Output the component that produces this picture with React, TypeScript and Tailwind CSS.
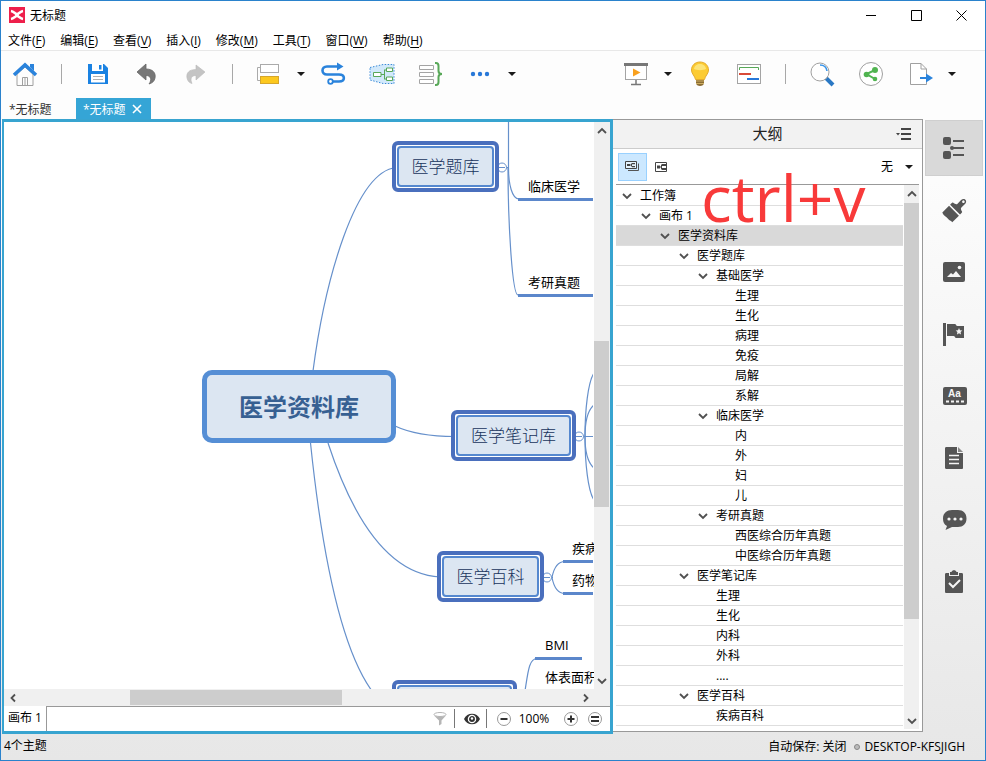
import type { ReactNode } from "react";

const menus = [
  ["文件", "F"],
  ["编辑", "E"],
  ["查看", "V"],
  ["插入", "I"],
  ["修改", "M"],
  ["工具", "T"],
  ["窗口", "W"],
  ["帮助", "H"],
];

type Row = { depth: number; text: string; open?: boolean; selected?: boolean };

const outline: Row[] = [
  { depth: 0, text: "工作簿", open: true },
  { depth: 1, text: "画布 1", open: true },
  { depth: 2, text: "医学资料库", open: true, selected: true },
  { depth: 3, text: "医学题库", open: true },
  { depth: 4, text: "基础医学", open: true },
  { depth: 5, text: "生理" },
  { depth: 5, text: "生化" },
  { depth: 5, text: "病理" },
  { depth: 5, text: "免疫" },
  { depth: 5, text: "局解" },
  { depth: 5, text: "系解" },
  { depth: 4, text: "临床医学", open: true },
  { depth: 5, text: "内" },
  { depth: 5, text: "外" },
  { depth: 5, text: "妇" },
  { depth: 5, text: "儿" },
  { depth: 4, text: "考研真题", open: true },
  { depth: 5, text: "西医综合历年真题" },
  { depth: 5, text: "中医综合历年真题" },
  { depth: 3, text: "医学笔记库", open: true },
  { depth: 4, text: "生理" },
  { depth: 4, text: "生化" },
  { depth: 4, text: "内科" },
  { depth: 4, text: "外科" },
  { depth: 4, text: "...." },
  { depth: 3, text: "医学百科", open: true },
  { depth: 4, text: "疾病百科" },
];

function ToolButton({ label, children }: { label: string; children: ReactNode }) {
  return (
    <button aria-label={label} className="flex h-[26px] w-[26px] shrink-0 items-center justify-center">
      <svg width="26" height="26" viewBox="0 0 26 26" fill="none">
        {children}
      </svg>
    </button>
  );
}

function CaretButton({ label }: { label: string }) {
  return (
    <button aria-label={label} className="-mx-2 flex h-[26px] w-2 shrink-0 items-center">
      <Caret />
    </button>
  );
}

function Caret() {
  return (
    <svg width="8" height="4" viewBox="0 0 8 4" className="block">
      <path d="M0 0H8L4 4Z" fill="#1a1a1a" />
    </svg>
  );
}

function Separator() {
  return <div className="h-5 w-px shrink-0 bg-[#a8a8a8]" />;
}

function Arrow({ d }: { d: string }) {
  return (
    <svg width="10" height="10" viewBox="0 0 10 10" fill="none" className="block">
      <path d={d} stroke="#505050" strokeWidth="1.800" />
    </svg>
  );
}

const UP = "M1 7L5 3L9 7";
const DOWN = "M1 3L5 7L9 3";
const LEFT = "M7 1.5L3.5 5L7 8.5";
const RIGHT = "M3 1.5L6.5 5L3 8.5";

function Toolbar() {
  return (
    <div className="flex h-[47px] shrink-0 items-center justify-between pr-[37px] pb-px pl-[11px]">
      <div className="flex items-center gap-[23px]">
        <ToolButton label="主页">
          <path d="M5 13V24.5H21V13L13 6Z" fill="#fdfdfd" stroke="#a0a0a0" />
          <path d="M10.500 24V16.500H15.500V24M13 16.500V24" stroke="#a0a0a0" />
          <path d="M18 3H22V10L18 6Z" fill="#2a83dc" />
          <path d="M2 14L13 4L24 14" stroke="#2a83dc" strokeWidth="3.600" />
        </ToolButton>
        <Separator />
        <ToolButton label="保存">
          <path d="M3 3H19L23 7V23H3Z" fill="#1a82e2" />
          <path d="M7 3H18V10H7Z" fill="#fff" />
          <path d="M14 4H16.500V8.500H14Z" fill="#1a82e2" />
          <path d="M6 13H20V21.500H6Z" fill="#fff" />
          <path d="M8 15.500H18M8 18.500H18" stroke="#b0b0b0" />
        </ToolButton>
        <ToolButton label="撤消">
          <path d="M3 11L12 3V8C19 8 22 12 21 17C20.500 20 18.500 22 15 23C18 19 17 14.500 12 14.500V19Z" fill="#777" stroke="#666" strokeWidth=".8" />
        </ToolButton>
        <ToolButton label="重做">
          <path d="M22 11L13 4V8.500C6 8.500 3 12 4 17C4.500 20 6.500 22 9 22.500C7 18 8 14.500 13 14.500V19Z" fill="#c4c4c4" stroke="#b8b8b8" strokeWidth=".6" />
        </ToolButton>
        <Separator />
        <ToolButton label="主题">
          <path d="M4.500 6.500H1.500V19.500H4.500" stroke="#aaa" />
          <rect x="4.500" y="3.500" width="18" height="8" fill="#fff" stroke="#aaa" />
          <rect x="4.500" y="15.500" width="18" height="7" fill="#fcc81e" stroke="#d6a62c" />
        </ToolButton>
        <CaretButton label="主题选项" />
        <ToolButton label="联系">
          <path d="M18 5.500H7C1 5.500 1 13.500 7 13.500H19C25.500 13.500 25.500 20.500 19 20.500H13" stroke="#2a83dc" strokeWidth="2.600" />
          <path d="M17 1.500L23.500 5.500L17 9.500Z" fill="#2a83dc" />
          <circle cx="10.500" cy="20.500" r="2.300" fill="#fff" stroke="#2a83dc" strokeWidth="1.800" />
        </ToolButton>
        <ToolButton label="外框">
          <path d="M1 6.500L14 3.500H25V22.500H14L1 19Z" fill="#d2e9fb" stroke="#3a8ad8" strokeDasharray="1.500 1.500" />
          <path d="M12 13.500H15M15.500 9V18M15 9H17M15 18H17" stroke="#58a858" />
          <path d="M4.500 11.500H12V15.500H4.500ZM17.500 7H23.500V10.500H17.500ZM17.500 16H23.500V19.500H17.500Z" fill="#fff" stroke="#58a858" />
        </ToolButton>
        <ToolButton label="概要">
          <path d="M1.500 4.500H15.500V8.500H1.500ZM1.500 11.500H15.500V15.500H1.500ZM1.500 18.500H15.500V22.500H1.500Z" fill="#fff" stroke="#a4a4a4" />
          <path d="M17 2H18C20 2 20.500 3 20.500 5V10C20.500 12 21.500 13 24 13C21.500 13 20.500 14 20.500 16V21C20.500 23 20 24 18 24H17" stroke="#58a858" strokeWidth="2" />
        </ToolButton>
        <ToolButton label="更多">
          <circle cx="6" cy="13" r="2.200" fill="#2878d8" />
          <circle cx="13" cy="13" r="2.200" fill="#2878d8" />
          <circle cx="20" cy="13" r="2.200" fill="#2878d8" />
        </ToolButton>
        <CaretButton label="更多选项" />
      </div>
      <div className="flex items-center gap-[23px]">
        <ToolButton label="演示">
          <rect x="2.500" y="4.500" width="21" height="14" fill="#fff" stroke="#a4a4a4" />
          <path d="M1 2H25V5H1Z" fill="#777" />
          <path d="M10 7.500L17.500 11.500L10 15.500Z" fill="#f8a01e" />
          <path d="M13 19V23.500M8 23.500H18" stroke="#777" strokeWidth="1.500" />
        </ToolButton>
        <CaretButton label="演示选项" />
        <ToolButton label="头脑风暴">
          <path d="M9 17.500H17V22C17 24 15 25 13 25S9 24 9 22Z" fill="#8c6d35" />
          <path d="M9 20H17M9 22.500H17" stroke="#e0c070" strokeWidth=".8" />
          <path d="M13 1C8 1 4.500 4.500 4.500 9C4.500 13 8 15 8.500 18.500H17.500C18 15 21.500 13 21.500 9C21.500 4.500 18 1 13 1Z" fill="#fccb32" stroke="#e4ab2c" />
          <path d="M7 8C7.500 4.500 10 3 13 3S18.500 4.500 19 8C16 9.500 10 9.500 7 8Z" fill="#fde477" />
        </ToolButton>
        <ToolButton label="甘特图">
          <rect x="1.500" y="3.500" width="23" height="19" fill="#fff" stroke="#a4a4a4" />
          <path d="M3.500 9V6.500H22.500V9" stroke="#58a858" />
          <path d="M3 13H15" stroke="#d84a38" strokeWidth="2" />
          <path d="M11 18H23" stroke="#2878d8" strokeWidth="2" />
        </ToolButton>
        <Separator />
        <ToolButton label="搜索">
          <path d="M17 17L24 24" stroke="#2a78c4" strokeWidth="4" />
          <circle cx="11" cy="11" r="9" fill="#fff" stroke="#a0a0a0" />
          <path d="M11 4C15 4 17.500 6.500 18 10" stroke="#3a96ea" strokeWidth="1.600" />
        </ToolButton>
        <ToolButton label="分享">
          <circle cx="13" cy="13" r="11.500" fill="#fff" stroke="#a0a0a0" />
          <path d="M17 9L8.500 13L17 18" stroke="#50b450" strokeWidth="2" />
          <circle cx="17" cy="9" r="3" fill="#50b450" />
          <circle cx="8.500" cy="13.500" r="2.800" fill="#50b450" />
          <circle cx="17" cy="18" r="2.300" fill="#50b450" />
        </ToolButton>
        <ToolButton label="导出">
          <path d="M3.500 2.500H14L19.500 8V23.500H3.500Z" fill="#fff" stroke="#a0a0a0" />
          <path d="M14 2.500V8H19.500" stroke="#a0a0a0" />
          <path d="M13 17H20" stroke="#2a83dc" strokeWidth="2" />
          <path d="M19 12.500L26 17L19 21.500Z" fill="#2a83dc" />
        </ToolButton>
        <CaretButton label="导出选项" />
      </div>
    </div>
  );
}

function Topic({ className, text }: { className: string; text: string }) {
  return (
    <div className={`absolute h-[51px] rounded-md border-4 border-[#4a6fbd] bg-white p-px ${className}`}>
      <div className="flex h-full items-center justify-center rounded-sm border-2 border-[#5588cf] bg-[#dce6f2] text-[17px] font-light whitespace-nowrap text-[#17335c]">
        {text}
      </div>
    </div>
  );
}

function Label({ className, text }: { className: string; text: string }) {
  return <span className={`absolute text-[13px] leading-5 whitespace-nowrap ${className}`}>{text}</span>;
}

function MindMap() {
  return (
    <div className="relative min-w-0 flex-1 overflow-hidden bg-white">
      <svg width="589" height="567" viewBox="4 122 589 567" fill="none" className="absolute top-0 left-0">
        <g stroke="#6690cb" strokeWidth="1.200">
          <path d="M313 371C325 280 355 172 396 167.500" />
          <path d="M395 426C412 434 430 436.500 455 436.500" />
          <path d="M328 443C350 510 385 574 440 577" />
          <path d="M310.500 443C318 515 335 640 372 691" />
          <path d="M508.500 120V168C508.500 184 512 199 519 199" />
          <path d="M508 168C508 220 512 295 518 295" />
          <path d="M499 167.500H508M576 436.500H593M544 577.500H553" />
          <path d="M594 373C588 382 585 410 585 436.500C585 463 588 491 594 500" />
          <path d="M594 405C588 410 585 422 585 436.500C585 451 588 463 594 468" />
          <path d="M552 577.500C554 567 558 561.500 565 561.500M552 577.500C554 588 558 593.500 565 593.500" />
          <path d="M525 691C528 672 529 658.500 537 658.500" />
        </g>
        <g fill="#fff" stroke="#6690cb">
          <circle cx="502" cy="167.500" r="4.500" />
          <circle cx="579" cy="436.500" r="4.500" />
          <circle cx="547" cy="577.500" r="4.500" />
          <path d="M499 167.500H505M576 436.500H582M544 577.500H550" />
        </g>
        <path
          d="M518 199.500H593M518 295.500H593M563 561.500H594M563 593.500H594M535 658.500H582"
          stroke="#5b87cb"
          strokeWidth="3"
        />
      </svg>
      <div className="absolute top-[248px] left-[198px] flex h-[73px] w-[194px] items-center justify-center rounded-[10px] border-[5px] border-[#558ed5] bg-[#dce6f2] text-2xl font-bold text-[#376092]">
        医学资料库
      </div>
      <Topic className="top-[19px] left-[388px] w-[107px]" text="医学题库" />
      <Topic className="top-[288px] left-[447px] w-[125px]" text="医学笔记库" />
      <Topic className="top-[429px] left-[433px] w-[107px]" text="医学百科" />
      <Topic className="top-[558px] left-[388px] w-[125px]" text="" />
      <Label className="top-[54px] left-[524px]" text="临床医学" />
      <Label className="top-[150px] left-[524px]" text="考研真题" />
      <Label className="top-[416px] left-[568px]" text="疾病百科" />
      <Label className="top-[448px] left-[568px]" text="药物百科" />
      <Label className="top-[513px] left-[541px]" text="BMI" />
      <Label className="top-[545px] left-[541px]" text="体表面积" />
    </div>
  );
}

function ZoomIcon({ d }: { d: string }) {
  return (
    <svg width="14" height="14" viewBox="0 0 14 14" fill="none" className="block">
      <circle cx="7" cy="7" r="6.500" fill="#fff" stroke="#999" />
      <path d={d} stroke="#333" strokeWidth="2" />
    </svg>
  );
}

function Editor() {
  return (
    <section className="ml-px flex min-w-0 flex-1 flex-col border-[3px] border-l-2 border-[#38a4d0] bg-[#f0f0f0]">
      <div className="flex min-h-0 flex-1">
        <MindMap />
        <div className="flex w-4 shrink-0 flex-col items-center justify-between">
          <button aria-label="向上滚动" className="flex h-[17px] items-center">
            <Arrow d={UP} />
          </button>
          <div className="flex w-full flex-1 flex-col">
            <div className="flex-[202]" />
            <div className="w-[15px] flex-[166] bg-[#cdcdcd]" />
            <div className="flex-[165]" />
          </div>
          <button aria-label="向下滚动" className="flex h-[17px] items-center">
            <Arrow d={DOWN} />
          </button>
        </div>
      </div>
      <div className="flex h-[17px] shrink-0 items-center pr-4">
        <button aria-label="向左滚动" className="flex w-[17px] justify-center">
          <Arrow d={LEFT} />
        </button>
        <div className="flex flex-1">
          <div className="flex-[109]" />
          <div className="h-[15px] flex-[212] bg-[#cdcdcd]" />
          <div className="flex-[235]" />
        </div>
        <button aria-label="向右滚动" className="flex w-[17px] justify-center">
          <Arrow d={RIGHT} />
        </button>
      </div>
      <div className="flex h-[25px] shrink-0 bg-white">
        <button className="w-[43px] border-r border-[#999] pb-0.5 text-center text-xs">画布 1</button>
        <div className="flex flex-1 items-center justify-end border-t border-[#999] pr-2 pb-px">
          <button aria-label="筛选" className="mr-[7px]">
            <svg width="14" height="14" viewBox="0 0 14 14" fill="none" className="block">
              <ellipse cx="7" cy="2.500" rx="6" ry="2" fill="#fff" stroke="#b5b5b5" />
              <path d="M1 3.500L6 8.500V13.500L8.500 12V8.500L13 3.500C11 5 3 5 1 3.500Z" fill="#b5b5b5" />
            </svg>
          </button>
          <div className="h-[19px] w-px bg-[#777]" />
          <button aria-label="显示" className="mr-1.5 ml-[9px]">
            <svg width="16" height="12" viewBox="0 0 16 12" fill="none" className="block">
              <path d="M0 6C3 -1 13 -1 16 6C13 13 3 13 0 6Z" fill="#333" />
              <circle cx="8" cy="6" r="3.600" fill="#333" stroke="#fff" strokeWidth="1.300" />
              <circle cx="8" cy="5.500" r="1.200" fill="#fff" />
            </svg>
          </button>
          <div className="mr-2.5 h-[19px] w-px bg-[#777]" />
          <button aria-label="缩小">
            <ZoomIcon d="M3.500 7H10.500" />
          </button>
          <button className="w-[46px] text-center text-xs">100%</button>
          <button aria-label="放大" className="ml-[7px]">
            <ZoomIcon d="M3.500 7H10.500M7 3.500V10.500" />
          </button>
          <button aria-label="实际大小" className="ml-2.5">
            <ZoomIcon d="M3 5H11M3 9H11" />
          </button>
        </div>
      </div>
    </section>
  );
}

function OutlinePanel() {
  return (
    <section className="relative mb-0.5 flex w-[310px] shrink-0 flex-col border-t border-r border-b border-[#999] bg-white">
      <div className="flex h-[29px] shrink-0 items-center border-b border-[#ccc] bg-[#f2f2f2] pr-2.5 pl-[26px]">
        <h2 className="flex-1 pb-0.5 text-center text-[15px] leading-5 text-[#222]">大纲</h2>
        <button aria-label="面板菜单">
          <svg width="16" height="12" viewBox="0 0 16 12" fill="none" className="block">
            <path d="M0 5H4L2 7.500Z" fill="#444" />
            <path d="M5 1H15M5 6H15M5 11H15" stroke="#444" strokeWidth="2" />
          </svg>
        </button>
      </div>
      <div className="mx-[3px] flex h-9 shrink-0 items-center border-b border-[#999] pr-1.5 pl-0.5">
        <button aria-label="全部画布" className="flex h-7 w-[29px] items-center justify-center border border-[#99d1ff] bg-[#cce8ff]">
          <svg width="15" height="11" viewBox="0 0 15 11" fill="none">
            <path d="M3 9.500H13.500V2.500" stroke="#555" />
            <path d="M.5 .5H11.500V7.500H.5Z" fill="#e4f2fd" stroke="#444" />
            <path d="M2 3H5V5H2ZM7 2H10V3.200H7ZM7 5H10V6.200H7Z" fill="#444" />
            <path d="M5 4H6.500V2.500M6.500 4V5.500" stroke="#444" />
          </svg>
        </button>
        <button aria-label="当前画布" className="ml-2">
          <svg width="12" height="10" viewBox="0 0 12 10" fill="none" className="block">
            <path d="M.5 .5H11.500V9.500H.5Z" fill="#fff" stroke="#444" />
            <path d="M2 3.500H5V6.500H2ZM7 2H11V4H7ZM7 6H11V8H7Z" fill="#444" />
            <path d="M5 5H6.500M6.500 2.500V7.500" stroke="#444" />
          </svg>
        </button>
        <label className="ml-auto flex items-center gap-2.5">
          <select aria-label="筛选方式" className="w-3.5 appearance-none bg-transparent text-xs">
            <option>无</option>
          </select>
          <Caret />
        </label>
      </div>
      <div className="mx-[3px] flex min-h-0 flex-1 overflow-hidden">
        <ul className="min-w-0 flex-1 pt-px">
          {outline.map((row, i) => (
            <li
              key={i}
              className={`flex h-5 items-center border-b border-[#dedede] text-xs ${row.selected ? "bg-[#d9d9d9]" : ""}`}
            >
              <span className="shrink-0" style={{ width: row.depth * 19 }} />
              <span className="flex w-6 shrink-0 pl-1.5">
                {row.open && (
                  <button aria-label={`折叠 ${row.text}`}>
                    <Arrow d={DOWN} />
                  </button>
                )}
              </span>
              {row.text}
            </li>
          ))}
        </ul>
        <div className="mb-0.5 ml-px flex w-[15px] shrink-0 flex-col items-center bg-[#f0f0f0]">
          <button aria-label="大纲向上滚动" className="flex h-[18px] items-center">
            <Arrow d={UP} />
          </button>
          <div className="flex w-full flex-1 flex-col">
            <div className="flex-[417] bg-[#cdcdcd]" />
            <div className="flex-[93]" />
          </div>
          <button aria-label="大纲向下滚动" className="flex h-[17px] items-center">
            <Arrow d={DOWN} />
          </button>
        </div>
      </div>
      <span className="pointer-events-none absolute top-[38px] left-[88px] text-[64px] leading-[80px] font-medium text-[#f83a3a]">
        ctrl+v
      </span>
    </section>
  );
}

function SideButton({ label, active, children }: { label: string; active?: boolean; children: ReactNode }) {
  return (
    <button
      aria-label={label}
      className={`flex h-14 shrink-0 items-center justify-center border ${active ? "border-[#cfcfcf] bg-[#d9d9d9]" : "border-transparent"}`}
    >
      <svg width="24" height="24" viewBox="0 0 24 24" fill="#555" className="overflow-visible">
        {children}
      </svg>
    </button>
  );
}

function SideBar() {
  return (
    <nav aria-label="面板" className="flex w-[62px] shrink-0 flex-col gap-1.5 pt-px pr-0.5 pl-0.5">
      <SideButton label="大纲" active>
        <rect x="1" y="1" width="8" height="8" rx="2" />
        <rect x="1" y="15" width="8" height="8" rx="2" />
        <circle cx="10" cy="12" r="2" />
        <path d="M11 4H22V6H11ZM10 11H22V13H10ZM11 18H22V20H11Z" />
      </SideButton>
      <SideButton label="格式">
        <g transform="rotate(45 12 12)">
          <path d="M10 5V0C10 -4.500 15.500 -4.500 15.500 0V5C15.500 6.500 17 7 19 7.500C19.500 8 19.500 8.500 19.500 11H5.500C5.500 8.500 5.500 8 6 7.500C8.500 7 10 6.500 10 5Z" />
          <path d="M5.500 12.500H19.500V22C17 21.500 16 23 14 22.500C11 22 9 23.500 5.500 22Z" />
          <circle cx="12.800" cy="-.5" r="1.300" fill="#f8f8f8" />
        </g>
      </SideButton>
      <SideButton label="图片">
        <rect x="1" y="2" width="22" height="20" rx="2" />
        <circle cx="17.500" cy="7.500" r="1.800" fill="#f5f5f5" />
        <path d="M5 17L9 13L11 14.500L14 11L19 17Z" fill="#f5f5f5" />
      </SideButton>
      <SideButton label="图标">
        <path d="M1 1H4V24H1Z" />
        <path d="M5 2H13C14 2 14 4 15.500 4H22V16H14C13 16 13 14 11.500 14H5Z" />
        <path d="M17 6L18 8.200L20.300 8.500L18.600 10L19 12.400L17 11.200L15 12.400L15.400 10L13.700 8.500L16 8.200Z" fill="#f5f5f5" />
      </SideButton>
      <SideButton label="样式">
        <rect x="1" y="3" width="24" height="18" rx="2" />
        <text x="6" y="13" fontSize="10" fontWeight="bold" fill="#f5f5f5" className="font-['Liberation_Sans',sans-serif]">
          Aa
        </text>
        <path d="M4 17.500H22" stroke="#f5f5f5" strokeWidth="2" strokeDasharray="3 2" />
      </SideButton>
      <SideButton label="备注">
        <path d="M4.500 1H15V7H21V22C21 22.500 20.500 23 20 23H4.500C4 23 3 22.500 3 22V2.500C3 1.500 3.500 1 4.500 1Z" />
        <path d="M16 1L21 6H16Z" fill="#888" />
        <path d="M7 9.500H17M7 13.500H17M7 17.500H17" stroke="#f5f5f5" strokeWidth="1.300" />
      </SideButton>
      <SideButton label="批注">
        <path d="M10 2H16C21 2 24.500 5 24.500 10.500C24.500 16 21 19 16 19H10L3.500 22L5 18C2 16.500 1 14 1 10.500C1 5 5 2 10 2Z" />
        <circle cx="7" cy="11" r="1.600" fill="#f5f5f5" />
        <circle cx="13" cy="11" r="1.600" fill="#f5f5f5" />
        <circle cx="19" cy="11" r="1.600" fill="#f5f5f5" />
      </SideButton>
      <SideButton label="任务信息">
        <path d="M4.500 3H7V6H17V3H19.500C20.500 3 21 3.500 21 4.500V21.500C21 22.500 20.500 23 19.500 23H4.500C3.500 23 3 22.500 3 21.500V4.500C3 3.500 3.500 3 4.500 3Z" />
        <path d="M8 5V2H9.500C10 -.5 14 -.5 14.500 2H16V5Z" />
        <path d="M7 13L11 17L18 10" fill="none" stroke="#f5f5f5" strokeWidth="2" />
      </SideButton>
    </nav>
  );
}

export default function App() {
  return (
    <div className="flex h-screen flex-col overflow-hidden border border-[#2a82cc] bg-linear-to-b from-[#fdfdfd] from-20% to-[#e7e7e7] font-['Open_Sans','Noto_Sans_CJK_SC',sans-serif] text-black">
      <header className="flex h-7 shrink-0 items-center bg-white pr-[18px] pl-2 text-xs">
        <svg width="16" height="16" viewBox="0 0 16 16" fill="none" aria-hidden="true">
          <rect width="16" height="16" fill="#ee1f4b" />
          <path d="M2 4C5 4.500 6 7 8 7S11 4.500 14 4M2 12C5 11.500 6 9 8 9S11 11.500 14 12" stroke="#fff" strokeWidth="2.600" />
          <circle cx="8" cy="8" r="2" fill="#fff" />
        </svg>
        <h1 className="ml-[5px] pt-px">无标题</h1>
        <div className="ml-auto flex items-center gap-[34px]">
          <button aria-label="最小化">
            <svg width="11" height="11" viewBox="0 0 11 11" fill="none" className="block">
              <path d="M0 5.500H10" stroke="#000" />
            </svg>
          </button>
          <button aria-label="最大化">
            <svg width="11" height="11" viewBox="0 0 11 11" fill="none" className="block">
              <path d="M.5 .5H10.500V10.500H.5Z" stroke="#000" />
            </svg>
          </button>
          <button aria-label="关闭">
            <svg width="11" height="11" viewBox="0 0 11 11" fill="none" className="block">
              <path d="M.5 .5L10.500 10.500M10.500 .5L.5 10.500" stroke="#000" />
            </svg>
          </button>
        </div>
      </header>
      <nav aria-label="菜单" className="flex h-[22px] shrink-0 items-center gap-[15px] border-b border-[#e8e8e8] bg-white pt-0.5 pl-[7px] text-xs">
        {menus.map(([name, key]) => (
          <button key={key} className="whitespace-nowrap">
            {name}(<u className="underline-offset-2">{key}</u>)
          </button>
        ))}
      </nav>
      <Toolbar />
      <div className="flex h-[21px] shrink-0 pl-2 text-xs text-[#333]">
        <button className="w-[67px] pt-0.5 text-left">*无标题</button>
        <div className="flex w-[75px] items-center bg-[#35a5d6] pl-[7px] text-white">
          <button className="pt-0.5">*无标题</button>
          <button aria-label="关闭标签" className="ml-1.5">
            <svg width="10" height="10" viewBox="0 0 10 10" fill="none" className="block">
              <path d="M1 1L9 9M9 1L1 9" stroke="#fff" strokeWidth="1.600" />
            </svg>
          </button>
        </div>
      </div>
      <main className="flex min-h-0 flex-1">
        <Editor />
        <OutlinePanel />
        <SideBar />
      </main>
      <footer className="flex h-[26px] shrink-0 items-center pr-5 pl-[3px] text-xs">
        <span className="pb-0.5">4个主题</span>
        <span className="ml-auto">自动保存: 关闭</span>
        <span className="mx-1 ml-2 h-1.5 w-1.5 rounded-full border border-[#888] bg-[#bbb]" />
        <span>DESKTOP-KFSJIGH</span>
      </footer>
    </div>
  );
}
